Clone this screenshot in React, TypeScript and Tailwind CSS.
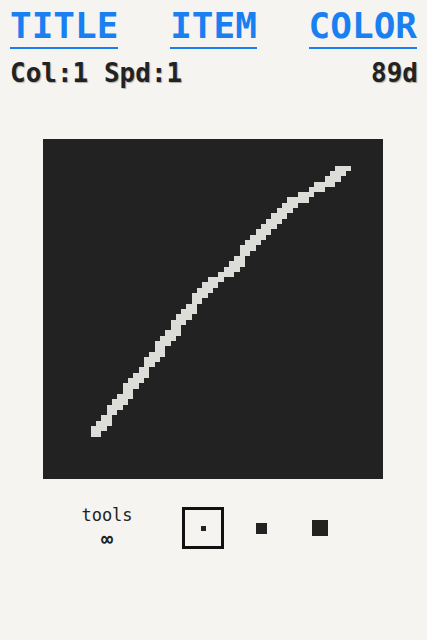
import React from "react";

const GRID = 64;
const CELL = 340 / GRID;

// stroke sampled from the drawing, in page pixels
const strokePoints: [number, number][] = [
  [92, 434],
  [120, 399],
  [164, 340],
  [200, 293],
  [229, 268],
  [260, 232],
  [289, 203],
  [320, 186],
  [341, 170],
];

function strokeCells() {
  const cells = new Set<string>();
  for (let i = 0; i < strokePoints.length - 1; i++) {
    const [x0, y0] = strokePoints[i];
    const [x1, y1] = strokePoints[i + 1];
    for (let s = 0; s <= 40; s++) {
      const t = s / 40;
      const gx = Math.floor((x0 + (x1 - x0) * t - 43) / CELL);
      const gy = Math.floor((y0 + (y1 - y0) * t - 139) / CELL);
      cells.add(`${gx},${gy}`);
      cells.add(`${gx + 1},${gy}`);
    }
  }
  return Array.from(cells).map((c) => c.split(",").map(Number));
}

function HeaderLink({ label }: { label: string }) {
  return (
    <a className="border-b-2 border-[#1a7ff0] pb-[3px] font-bold text-[36px] leading-none text-[#1a7ff0] cursor-pointer">
      {label}
    </a>
  );
}

export default function App() {
  const cells = strokeCells();

  return (
    <div
      className="w-[427px] h-[640px] bg-[#f5f4f0] overflow-hidden"
      style={{ fontFamily: '"DejaVu Sans Mono", monospace' }}
    >
      <div className="flex justify-between px-[10px] pt-[8px]">
        <HeaderLink label="TITLE" />
        <HeaderLink label="ITEM" />
        <HeaderLink label="COLOR" />
      </div>

      <div className="flex justify-between pl-[10px] pr-[9px] mt-[11px] text-[26px] font-bold leading-none text-[#222] [text-shadow:1px_1px_1px_rgba(0,0,0,0.3)]">
        <span>Col:1 Spd:1</span>
        <span>89d</span>
      </div>

      <div className="mt-[53px] ml-[43px] w-[340px] h-[340px] bg-[#222222]">
        <svg
          width={340}
          height={340}
          viewBox={`0 0 ${GRID} ${GRID}`}
          shapeRendering="crispEdges"
        >
          {cells.map(([x, y]) => (
            <rect key={`${x}-${y}`} x={x} y={y} width={1} height={1} fill="#dcdcd8" />
          ))}
        </svg>
      </div>

      <div className="flex items-center mt-[28px]">
        <div className="ml-[82px] w-[50px] flex flex-col items-center text-[17px] leading-none text-[#222]">
          <span>tools</span>
          <span className="mt-[5px] text-[20px] font-bold">∞</span>
        </div>
        <button className="ml-[50px] w-[42px] h-[42px] border-[3px] border-[#111] flex items-center justify-center">
          <span className="w-[5px] h-[5px] bg-[#222]" />
        </button>
        <span className="ml-[32px] w-[11px] h-[11px] bg-[#222]" />
        <span className="ml-[45px] w-[16px] h-[16px] bg-[#222]" />
      </div>
    </div>
  );
}
